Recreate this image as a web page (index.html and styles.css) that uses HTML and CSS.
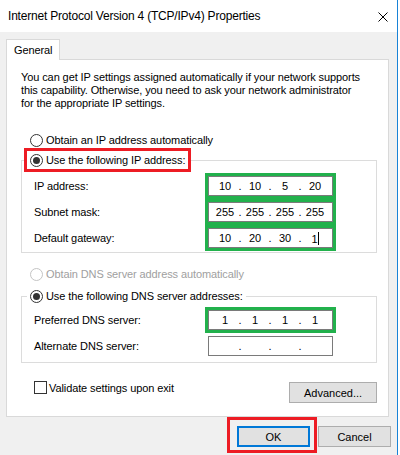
FILE: index.html
```html
<!DOCTYPE html>
<html lang="en">
<head>
    <meta charset="UTF-8">
    <title>Internet Protocol Version 4 (TCP/IPv4) Properties</title>
    <link rel="stylesheet" href="styles.css">
</head>
<body>
    <div class="window">
        <div class="titlebar">
            <span class="title">Internet Protocol Version 4 (TCP/IPv4) Properties</span>
            <span class="close">
                <svg width="10" height="10" viewBox="0 0 10 10"><path d="M0.5 0.5 L9.5 9.5 M9.5 0.5 L0.5 9.5" stroke="#000" stroke-width="1" fill="none"/></svg>
            </span>
        </div>

        <div class="client">
            <div class="tabs">
                <div class="tab">General</div>
            </div>

            <div class="panel">
                <p class="intro">You can get IP settings assigned automatically if your network supports this capability. Otherwise, you need to ask your network administrator for the appropriate IP settings.</p>

                <div class="option">
                    <span class="radio"></span>
                    <span>Obtain an IP address automatically</span>
                </div>

                <fieldset class="group group-ip">
                    <legend class="option marked">
                        <span class="radio checked"></span>
                        <span>Use the following IP address:</span>
                    </legend>
                    <div class="row">
                        <span class="label">IP address:</span>
                        <div class="ipbox highlight">
                            <span class="seg">10</span><span class="dot">.</span><span class="seg">10</span><span class="dot">.</span><span class="seg">5</span><span class="dot">.</span><span class="seg">20</span>
                        </div>
                    </div>
                    <div class="row">
                        <span class="label">Subnet mask:</span>
                        <div class="ipbox highlight">
                            <span class="seg">255</span><span class="dot">.</span><span class="seg">255</span><span class="dot">.</span><span class="seg">255</span><span class="dot">.</span><span class="seg">255</span>
                        </div>
                    </div>
                    <div class="row">
                        <span class="label">Default gateway:</span>
                        <div class="ipbox highlight">
                            <span class="seg">10</span><span class="dot">.</span><span class="seg">20</span><span class="dot">.</span><span class="seg">30</span><span class="dot">.</span><span class="seg">1<span class="caret"></span></span>
                        </div>
                    </div>
                </fieldset>

                <div class="option disabled option-dns">
                    <span class="radio"></span>
                    <span>Obtain DNS server address automatically</span>
                </div>

                <fieldset class="group group-dns">
                    <legend class="option">
                        <span class="radio checked"></span>
                        <span>Use the following DNS server addresses:</span>
                    </legend>
                    <div class="row">
                        <span class="label">Preferred DNS server:</span>
                        <div class="ipbox highlight">
                            <span class="seg">1</span><span class="dot">.</span><span class="seg">1</span><span class="dot">.</span><span class="seg">1</span><span class="dot">.</span><span class="seg">1</span>
                        </div>
                    </div>
                    <div class="row">
                        <span class="label">Alternate DNS server:</span>
                        <div class="ipbox">
                            <span class="seg"></span><span class="dot">.</span><span class="seg"></span><span class="dot">.</span><span class="seg"></span><span class="dot">.</span><span class="seg"></span>
                        </div>
                    </div>
                </fieldset>

                <div class="footer-row">
                    <div class="check-option">
                        <span class="checkbox"></span>
                        <span>Validate settings upon exit</span>
                    </div>
                    <button class="btn btn-advanced">Advanced...</button>
                </div>
            </div>

            <div class="buttons">
                <div class="ok-mark">
                    <button class="btn btn-default">OK</button>
                </div>
                <button class="btn btn-cancel">Cancel</button>
            </div>
        </div>
    </div>
</body>
</html>
```

FILE: styles.css
```css
body {
    margin: 0;
    background-color: #fff;
    font-family: "Liberation Sans", Arial, sans-serif;
    font-size: 11px;
    letter-spacing: -0.1px;
    color: #000;
}
.window {
    width: 397px;
    height: 455px;
    border-right: 1px solid #1883d7;
    background-color: #f0f0f0;
}
.titlebar {
    height: 32px;
    background-color: #fff;
    display: flex;
    align-items: center;
    justify-content: space-between;
    padding: 0 9px 0 8px;
    font-size: 12px;
    letter-spacing: -0.2px;
}
.close {
    display: flex;
    width: 10px;
    height: 10px;
    margin-top: 1px;
}
.client {
    padding: 7px 0 0 6px;
}
.tabs {
    height: 20px;
    display: flex;
}
.tab {
    position: relative;
    z-index: 1;
    height: 20px;
    padding: 0 7px;
    line-height: 21px;
    background-color: #fff;
    border: 1px solid #d9d9d9;
    border-bottom: none;
}
.panel {
    width: 383px;
    height: 358px;
    box-sizing: border-box;
    background-color: #fff;
    border: 1px solid #d9d9d9;
    padding: 11px 11px 0 14px;
}
.intro {
    margin: 0;
    padding-right: 13px;
    line-height: 13px;
}
.option {
    display: flex;
    align-items: center;
    height: 16px;
    gap: 3px;
}
.panel > .option {
    margin: 22px 0 0 9px;
}
.panel > .option-dns {
    margin-top: 13px;
}
.radio {
    width: 11px;
    height: 11px;
    border: 1px solid #333;
    border-radius: 50%;
    background-color: #fff;
    display: flex;
    align-items: center;
    justify-content: center;
}
.radio.checked::after {
    content: "";
    width: 7px;
    height: 7px;
    border-radius: 50%;
    background-color: #333;
}
.disabled {
    color: #a0a0a0;
}
.disabled .radio {
    border-color: #c4c4c4;
}
.group {
    margin: 3px 0 0 0;
    padding: 0 0 4px 12px;
    border: 1px solid #dcdcdc;
    min-width: 0;
}
.group legend {
    height: 18px;
    padding: 0 3px;
    margin-left: -7px;
    box-sizing: border-box;
    background-color: #fff;
}
.group legend.marked {
    outline: 3px solid #ed1c24;
}
.group-dns {
    margin-top: 5px;
    padding-bottom: 6px;
}
.group-ip .row:first-of-type {
    margin-top: 7px;
}
.group-dns .row:first-of-type {
    margin-top: 5px;
}
.row {
    display: flex;
    align-items: center;
    height: 20px;
    margin-top: 6px;
}
.label {
    width: 174px;
}
.ipbox {
    width: 125px;
    height: 20px;
    box-sizing: border-box;
    border: 1px solid #7a7a7a;
    background-color: #fff;
    display: flex;
    align-items: center;
    padding-left: 4px;
    letter-spacing: 0;
}
.ipbox.highlight {
    outline: 3px solid #22b14c;
    outline-offset: 0;
}
.seg {
    width: 24px;
    text-align: center;
}
.dot {
    width: 6px;
    text-align: center;
}
.caret {
    display: inline-block;
    width: 1px;
    height: 13px;
    background-color: #000;
    vertical-align: -2px;
}
.footer-row {
    display: flex;
    justify-content: space-between;
    align-items: flex-start;
    margin-top: 18px;
}
.check-option {
    display: flex;
    align-items: center;
    gap: 2px;
    margin-left: 13px;
}
.checkbox {
    width: 11px;
    height: 11px;
    border: 1px solid #333;
    background-color: #fff;
}
.btn {
    font-family: "Liberation Sans", Arial, sans-serif;
    font-size: 11px;
    color: #000;
    background-color: #e1e1e1;
    border: 1px solid #adadad;
    padding: 0;
    height: 21px;
    box-sizing: border-box;
}
.btn-advanced {
    width: 88px;
    margin-top: 1px;
}
.buttons {
    display: flex;
    justify-content: flex-end;
    align-items: flex-end;
    padding-right: 6px;
    gap: 1px;
}
.ok-mark {
    border: 3px solid #ed1c24;
    padding: 6px 4px 3px 7px;
}
.btn-default {
    width: 73px;
    border: 2px solid #0078d7;
}
.btn-cancel {
    width: 73px;
    margin-bottom: 6px;
}
```
